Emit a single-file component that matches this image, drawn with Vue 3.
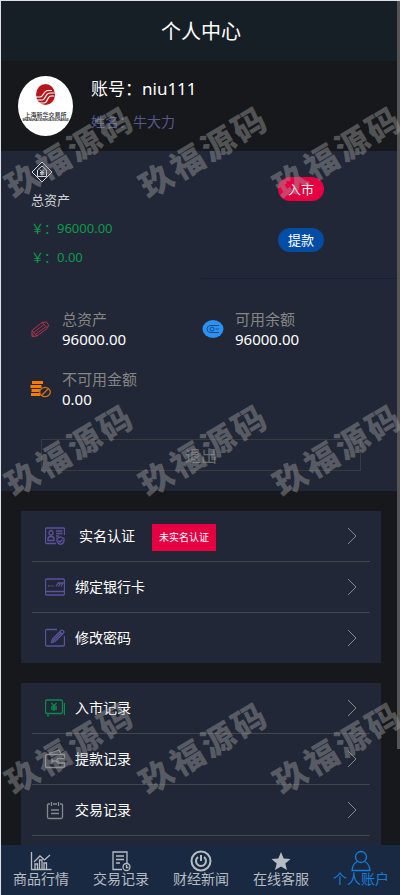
<script setup>
import { h } from 'vue'

const stats = [
  { label: '总资产', value: '96000.00', icon: 'pencil' },
  { label: '可用余额', value: '96000.00', icon: 'coin' },
  { label: '不可用金额', value: '0.00', icon: 'frozen' },
]

const groups = [
  [
    { label: '实名认证', icon: 'idcard', tag: '未实名认证' },
    { label: '绑定银行卡', icon: 'bank' },
    { label: '修改密码', icon: 'edit' },
  ],
  [
    { label: '入市记录', icon: 'cash' },
    { label: '提款记录', icon: 'wallet' },
    { label: '交易记录', icon: 'note' },
  ],
]

const tabs = [
  { label: '商品行情', icon: 'chart' },
  { label: '交易记录', icon: 'record' },
  { label: '财经新闻', icon: 'power' },
  { label: '在线客服', icon: 'star' },
  { label: '个人账户', icon: 'user', active: true },
]

const icons = {
  pencil: ['0 0 22 20', [
    'M3 11.500L13 3.500L17.500 3L19.500 6L18.500 9L8 17L3 17.500Z',
    'M3 11.500L8 17M4.500 13.500L15 5.500M6.500 15.500L17 7.500M13 3.500L18.500 9M3 14.500L5.500 17.500',
  ]],
  idcard: ['0 0 20 20', [
    'M11 17.500H1.500A1 1 0 0 1 .5 16.500V3A1 1 0 0 1 1.500 2H18.500A1 1 0 0 1 19.500 3V9',
    'M6 4.500A2 2.300 0 1 0 6 9.200A2 2.300 0 1 0 6 4.500M3 14.500V13Q3 10.500 6 10.500T9 13V14.500ZM11 5H17.500M11 7.500H17.500M11 10H14',
    'M15.500 11L19 12.500V15Q18.500 17.500 15.500 18.500Q12.500 17.500 12 15V12.500ZM13.500 14.500L15 16L17.500 13.500',
  ]],
  bank: ['0 0 20 20', ['M1.500 2H18.500L19.500 3V17L18.500 18H1.500L.5 17V3ZM.5 14.500H19.500M3 9H4.500M5.500 9H6.500M7.500 9H8.500M11 9.500L13 6M13.500 9.500L15.500 6H12.500M16 9.500L18 6H15.500']],
  edit: ['0 0 20 20', ['M12 1.500H2Q.5 1.500 .5 3V16.500Q.5 18 2 18H17.500Q19.500 18 19.500 16.500V8', 'M6.500 14.500L7.500 11L16 2.500Q17 1.700 18.300 2.700Q19.500 4 18.500 5L10 13.500ZM15 4L17.500 6.200M8 13L16 5']],
  cash: ['0 0 20 20', ['M1.500 2H16.500L17.500 3V14.500L16.500 15.500H1.500L.5 14.500V3ZM19.500 5V17M2 17.500H4', 'M6.500 5L9 8L11.500 5M9 8V13M6 9H12M6 11H12']],
  wallet: ['0 0 20 20', ['M19.500 9V5.500H2Q.5 5.500 .5 7V17Q.5 18.500 2 18.500H18Q19.500 18.500 19.500 17V14H13L11 12L13 9.500H19.500M4 4.500L14 1L16 5M7 12H14M7 9.500V14.500']],
  note: ['0 0 20 20', ['M5 4H3.500Q2.500 4 2.500 5V17Q2.500 18.500 4 18.500H16Q17.500 18.500 17.500 17V5Q17.500 4 16.500 4H15M8 4H12M6.500 2V6M13.500 2V6M6 10H14M6 13.500H14']],
  chart: ['0 0 22 20', ['M1.500 1V18.500H21.500', 'M5 18V13H7.500V18M9.500 18V9H12V18M14 18V12H16.500V18M4 11L10 5L14.500 9L20 4']],
  record: ['0 0 22 20', ['M17 12V1H3V18.500H12M6 5H14M6 8.500H14M6 12H10', 'M16.500 12.500A3.500 3.500 0 1 0 16.500 19.500A3.500 3.500 0 1 0 16.500 12.500M16.500 14V16.500H18.500']],
  power: ['0 0 22 22', ['M11 1.500A9.500 9.500 0 1 0 11 20.500A9.500 9.500 0 1 0 11 1.500', 'M8 7A5 5 0 1 0 14 7M11 5V11']],
  user: ['0 0 22 22', ['M11 1.500A5.500 5.500 0 1 0 11 12.500A5.500 5.500 0 1 0 11 1.500', 'M7.500 11.500Q2.500 13.500 2 20.500H20Q19.500 13.500 14.500 11.500']],
}

const LineIcon = (props) =>
  h('svg', { viewBox: icons[props.name][0], 'aria-hidden': 'true' },
    icons[props.name][1].map((d) => h('path', { d, fill: 'none', stroke: 'currentColor' })))
LineIcon.props = ['name']
</script>

<template>
  <div class="page">
    <div class="app">
      <header class="header"><h1>个人中心</h1></header>

      <section class="profile">
        <svg class="avatar" viewBox="0 0 55 60" aria-hidden="true">
          <ellipse cx="27.500" cy="30" rx="27.500" ry="30" fill="#fff" />
          <ellipse cx="27.500" cy="18.500" rx="9.500" ry="10.500" fill="#b5171b" />
          <path d="M18 21h4c4 0 3-6.500 8-6.500h4M18 24h6c4 0 3-7 8-7h4.500M21 27h5c4 0 3-7 7-7h3" fill="none" stroke="#fff" stroke-width="1.200" />
          <text x="27.500" y="41" text-anchor="middle" class="logo-cn">上海新华交易所</text>
          <text x="27.500" y="45" text-anchor="middle" class="logo-en">SHANGHAI XINHUA EXCHANGE</text>
        </svg>
        <div class="who">
          <p class="account">账号：niu111</p>
          <p class="name">姓名：牛大力</p>
        </div>
      </section>

      <section class="assets">
        <div class="summary">
          <div class="total">
            <svg class="total-icon" viewBox="0 0 22 22" fill="none" stroke="currentColor" aria-hidden="true">
              <path d="M11 1L21 11L11 21L1 11Z" />
              <path d="M6.500 9L11 5L15.500 9V15.500H6.500Z" />
              <path d="M9 8.500L11 11L13 8.500M11 11V14.500M9 11.500H13M9 13H13" />
            </svg>
            <p class="total-label">总资产</p>
            <p class="money">￥：96000.00</p>
            <p class="money">￥：0.00</p>
          </div>
          <div class="actions">
            <button type="button" class="pill deposit">入市</button>
            <button type="button" class="pill withdraw">提款</button>
          </div>
        </div>

        <div class="stats">
          <div v-for="s in stats" :key="s.label" class="stat">
            <svg v-if="s.icon === 'coin'" class="stat-icon" viewBox="0 0 22 20" aria-hidden="true">
              <ellipse cx="11" cy="10" rx="10.500" ry="9" fill="#2c91f5" />
              <path d="M13 6.500H8Q5 7 5 10T8 13.500H13M10 8A2 2 0 1 0 10 12A2 2 0 1 0 10 8M13 6.500H17M13.500 10H17M13 13.500H17" fill="none" stroke="#1b4c83" />
            </svg>
            <svg v-else-if="s.icon === 'frozen'" class="stat-icon" viewBox="0 0 22 20" aria-hidden="true">
              <path d="M3 3.500H14M1.500 7.500H12.500M2.500 11.500H11M2 15.500H11" fill="none" stroke="#f97b07" stroke-width="3" />
              <ellipse cx="16" cy="13" rx="5.300" ry="4.600" fill="#212736" stroke="#d9710f" stroke-width="1.300" />
              <path d="M13 16L19 10" stroke="#d9710f" stroke-width="1.300" />
            </svg>
            <LineIcon v-else :name="s.icon" class="stat-icon red" />
            <div>
              <p class="stat-label">{{ s.label }}</p>
              <p class="stat-value">{{ s.value }}</p>
            </div>
          </div>
        </div>

        <button type="button" class="logout">退出</button>
      </section>

      <nav v-for="(group, i) in groups" :key="i" class="group">
        <a v-for="item in group" :key="item.label" href="#" class="row">
          <LineIcon :name="item.icon" :class="['row-icon', item.icon]" />
          <span :class="['row-label', { tagged: item.tag }]">{{ item.label }}</span>
          <span v-if="item.tag" class="tag">{{ item.tag }}</span>
          <svg class="arrow" viewBox="0 0 10 18" fill="none" stroke="currentColor" aria-hidden="true">
            <path d="M1 1L9 9L1 17" />
          </svg>
        </a>
      </nav>

      <nav class="tabs">
        <a v-for="t in tabs" :key="t.label" href="#" :class="['tab', { active: t.active }]">
          <svg v-if="t.icon === 'star'" class="tab-icon" viewBox="0 0 22 22" aria-hidden="true">
            <path d="M11 2L13.700 8.500L20.500 9L15.300 13.500L17 20L11 16.500L5 20L6.700 13.500L1.500 9L8.300 8.500Z" fill="currentColor" />
          </svg>
          <LineIcon v-else :name="t.icon" :class="['tab-icon', t.icon]" />
          <span>{{ t.label }}</span>
        </a>
      </nav>
    </div>

    <div class="thumb"></div>
    <div class="watermarks" aria-hidden="true">
      <div v-for="n in 9" :key="n" class="mark">
        <div class="mark-text"><span v-for="c in '玖福源码'" :key="c">{{ c }}</span></div>
      </div>
    </div>
  </div>
</template>

<style>
body {
  margin: 0;
  background: #17181c;
}
</style>

<style scoped>
.page {
  position: relative;
  box-sizing: border-box;
  height: 100vh;
  overflow: hidden;
  border-top: 1px solid #dde2e6;
  border-left: 1px solid #dde2e6;
  background: #17181c;
  color: #fff;
  font-family: "Noto Sans", "Noto Sans CJK SC", sans-serif;
}
.app {
  display: flex;
  flex-direction: column;
  height: 100%;
  margin-right: -1px;
}
h1, p { margin: 0; font-weight: 400; }
a { color: inherit; text-decoration: none; }
button { font-family: inherit; padding: 0; }
svg { flex: none; display: block; }

.header {
  flex: none;
  height: 60px;
  background: #171f26;
  text-align: center;
}
.header h1 { font-size: 20px; line-height: 62px; }

.profile {
  flex: none;
  display: flex;
  gap: 18px;
  height: 90px;
  padding: 15px 17px 0;
  box-sizing: border-box;
}
.avatar { width: 55px; height: 60px; }
.logo-cn { font-size: 6px; font-weight: 500; fill: #222; }
.logo-en { font-size: 3px; font-weight: 700; fill: #222; }
.account { font-size: 17px; line-height: 26px; }
.name { margin-top: 8px; font-size: 14px; line-height: 24px; color: #55598c; }

.assets {
  flex: none;
  height: 340px;
  background: #212736;
}
.summary {
  display: grid;
  grid-template-columns: 1fr 1fr;
  height: 128px;
}
.total { padding: 10px 0 0 30px; }
.total-icon { width: 22px; height: 22px; color: #d5d8dd; }
.total-label { margin-top: 3px; font-size: 13px; line-height: 28px; color: #d3d3d3; }
.money { font-size: 13px; line-height: 29px; color: #0d9a49; }
.actions {
  display: flex;
  flex-direction: column;
  align-items: center;
  gap: 27px;
  padding-top: 26px;
  border-bottom: 1px solid #172136;
}
.pill {
  width: 46px;
  height: 24px;
  border: 0;
  border-radius: 12px;
  color: #fff;
  font-size: 13px;
  line-height: 24px;
}
.deposit { background: #e60042; }
.withdraw { background: #034da4; }

.stats {
  display: grid;
  grid-template-columns: 173px 1fr;
  padding: 29px 0 0 28px;
}
.stat { display: flex; gap: 11px; height: 60px; }
.stat-icon { width: 22px; height: 20px; margin-top: 11px; }
.red { color: #b8324c; }
.stat-label { font-size: 15px; line-height: 22px; color: #858585; }
.stat-value { font-size: 15px; line-height: 19px; }
.logout {
  display: block;
  width: 80%;
  height: 32px;
  margin: 11px auto 0;
  border: 1px solid #3d3a3d;
  background: transparent;
  color: #66676b;
  font-size: 16px;
}

.group {
  flex: none;
  margin: 20px 20px 0;
  padding: 0 11px;
  background: #212736;
}
.group + .group { flex: 1 0 0; min-height: 0; }
.row {
  display: flex;
  align-items: center;
  height: 50px;
  padding: 0 13px;
  border-bottom: 1px solid #43464a;
}
.group:not(.group + .group) .row:last-child { border-bottom: 0; }
.row-icon { width: 20px; height: 20px; color: #5c519d; stroke-width: 1.3; }
.cash { color: #078c49; }
.wallet, .note { color: #85888d; }
.row-label { margin-left: 10px; font-size: 14px; line-height: 20px; }
.tagged { margin-left: 14px; }
.tag {
  margin: 2px 0 0 17px;
  padding: 0 7px;
  background: #e60042;
  font-size: 10px;
  line-height: 27px;
}
.arrow { width: 10px; height: 18px; margin-left: auto; color: #85888d; }

.tabs {
  flex: none;
  display: grid;
  grid-template-columns: repeat(5, 1fr);
  height: 50px;
  background: #182941;
}
.tab {
  display: flex;
  flex-direction: column;
  align-items: center;
  padding-top: 5px;
  color: #b7bbc2;
  font-size: 14px;
  line-height: 14px;
}
.tab-icon { width: 22px; height: 22px; stroke-width: 1.3; }
.power { stroke-width: 2; }
.active { color: #177ddc; }

.thumb {
  position: absolute;
  top: 0;
  right: 0;
  width: 3px;
  height: 748px;
  background: #555;
}
.watermarks {
  position: absolute;
  inset: 0;
  display: grid;
  grid-template-columns: repeat(3, 134px);
  grid-auto-rows: 298px;
  overflow: hidden;
  pointer-events: none;
}
.mark {
  display: flex;
  align-items: center;
  justify-content: center;
  height: 302px;
  color: rgba(160, 160, 160, 0.44);
  font-size: 33px;
  font-weight: 900;
  line-height: 33px;
}
.mark-text {
  display: flex;
  gap: 3px;
  transform: rotate(-31deg);
}
</style>
